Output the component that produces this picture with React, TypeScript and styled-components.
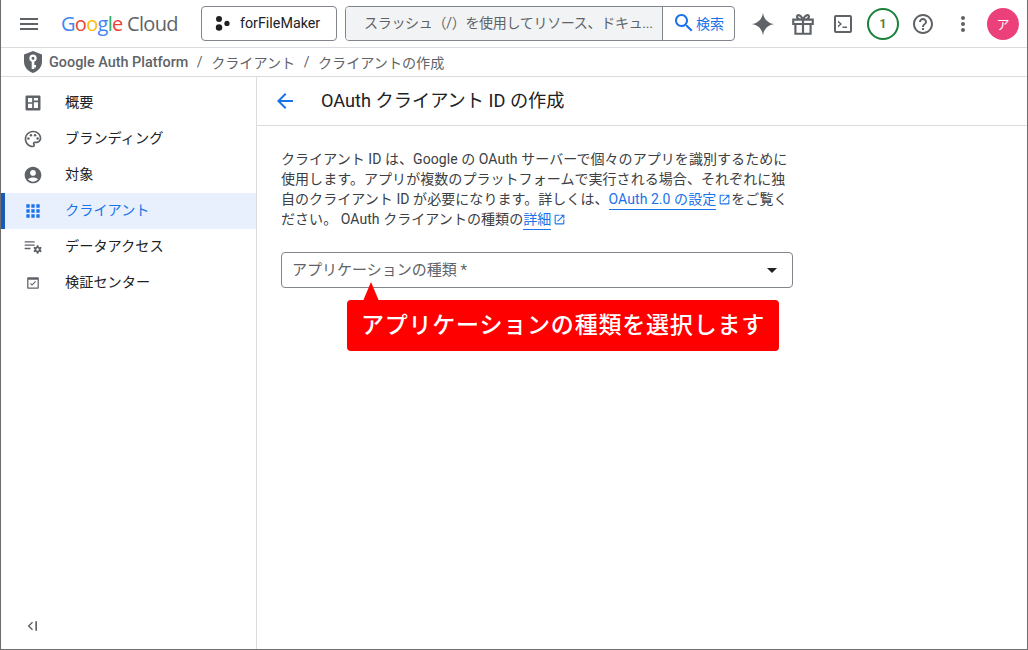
import React from 'react';
import styled, { createGlobalStyle } from 'styled-components';

const FONT = `Roboto, "Noto Sans CJK JP", sans-serif`;

const GlobalStyle = createGlobalStyle`
  html, body {
    margin: 0;
    padding: 0;
    background: #fff;
  }
  body {
    font-family: ${FONT};
    color: #202124;
  }
`;

const Frame = styled.div`
  box-sizing: border-box;
  width: 1028px;
  height: 650px;
  border: 1px solid #6d6d6d;
  border-top: 0;
  display: flex;
  flex-direction: column;
  overflow: hidden;
  background: #fff;
`;

// top bar
const TopBar = styled.header`
  flex: none;
  height: 48px;
  box-sizing: border-box;
  display: flex;
  align-items: center;
  border-bottom: 1px solid #dadce0;
`;

const MenuSlot = styled.span`
  width: 60px;
  padding-left: 16px;
  box-sizing: border-box;
  display: flex;
  flex: none;
  color: #5f6368;
`;

const Logo = styled.div`
  width: 140px;
  flex: none;
  font-family: "Open Sans", sans-serif;
  font-size: 20px;
  letter-spacing: -0.7px;
  white-space: nowrap;
  color: #5f6368;
`;

const Letter = styled.span<{ $c: string }>`
  color: ${p => p.$c};
`;

const ProjectButton = styled.div`
  box-sizing: border-box;
  width: 136px;
  height: 35px;
  flex: none;
  border: 1px solid #80868b;
  border-radius: 4px;
  display: flex;
  align-items: center;
  gap: 8px;
  padding-left: 12px;
  font-size: 14.3px;
  color: #202124;
  margin-top: -1px;
`;

const SearchBox = styled.div`
  box-sizing: border-box;
  width: 390px;
  height: 35px;
  flex: none;
  margin-left: 8px;
  margin-top: -1px;
  border: 1px solid #80868b;
  border-radius: 4px;
  display: flex;
  overflow: hidden;
`;

const SearchField = styled.div`
  width: 317px;
  flex: none;
  box-sizing: border-box;
  padding: 0 0 0 18px;
  background: #f1f3f4;
  border-right: 1px solid #80868b;
  color: #5f6368;
  font-size: 14px;
  letter-spacing: -0.3px;
  line-height: 33px;
  white-space: nowrap;
`;

const SearchAction = styled.div`
  flex: 1;
  display: flex;
  align-items: center;
  padding-left: 9px;
  color: #1a73e8;
  font-size: 14px;
`;

const ActionRow = styled.div`
  display: flex;
  align-items: center;
  margin-left: 8px;
`;

const ActionSlot = styled.span`
  width: 40px;
  height: 40px;
  display: flex;
  align-items: center;
  justify-content: center;
  color: #5f6368;
`;

const Counter = styled.span`
  box-sizing: border-box;
  width: 32px;
  height: 32px;
  border: 2px solid #188038;
  border-radius: 50%;
  display: flex;
  align-items: center;
  justify-content: center;
  font-size: 12px;
  font-weight: 700;
  color: #5f7a3a;
`;

const Avatar = styled.span`
  width: 32px;
  height: 32px;
  border-radius: 50%;
  background: #ec407a;
  color: #fff;
  font-size: 13px;
  display: flex;
  align-items: center;
  justify-content: center;
`;

// breadcrumb
const Crumbs = styled.nav`
  flex: none;
  height: 29px;
  box-sizing: border-box;
  border-bottom: 1px solid #dadce0;
  display: flex;
  align-items: center;
  padding-left: 20px;
  color: #5f6368;
  font-size: 14.1px;
  white-space: nowrap;
`;

const CrumbTitle = styled.span`
  margin-left: 4px;
  font-size: 14.4px;
  font-weight: 500;
`;

const CrumbSep = styled.span`
  margin: 0 8.5px;
`;

// body
const Body = styled.div`
  flex: 1;
  min-height: 0;
  display: flex;
`;

const Side = styled.aside`
  width: 256px;
  flex: none;
  box-sizing: border-box;
  border-right: 1px solid #dadce0;
  padding-top: 8px;
  display: flex;
  flex-direction: column;
`;

const NavItem = styled.div<{ $active?: boolean }>`
  height: 36px;
  flex: none;
  box-sizing: border-box;
  display: flex;
  align-items: center;
  padding-left: 22px;
  gap: 22px;
  font-size: 14.2px;
  color: ${p => (p.$active ? '#1a73e8' : '#202124')};
  background: ${p => (p.$active ? '#e8f0fe' : 'transparent')};
  border-left: 4px solid ${p => (p.$active ? '#185abc' : 'transparent')};
  & > svg {
    color: ${p => (p.$active ? '#1a73e8' : '#5f6368')};
    margin-left: -4px;
  }
`;

const NavLabel = styled.span`
  margin-bottom: 4px;
`;

const Collapse = styled.div`
  margin-top: auto;
  height: 31px;
  padding-left: 23px;
  color: #5f6368;
  display: flex;
  align-items: flex-start;
`;

const Main = styled.main`
  flex: 1;
  min-width: 0;
`;

const TitleRow = styled.div`
  height: 49px;
  box-sizing: border-box;
  border-bottom: 1px solid #dadce0;
  display: flex;
  align-items: center;
  padding-left: 16px;
  color: #1a73e8;
`;

const Title = styled.h1`
  margin: 0 0 5px 24px;
  font-size: 18.2px;
  font-weight: 400;
  color: #202124;
  white-space: nowrap;
`;

const Content = styled.div`
  width: 512px;
  padding: 23px 0 0 24px;
`;

const Intro = styled.p`
  margin: 0;
  font-size: 14px;
  letter-spacing: 0.06px;
  line-height: 20px;
  color: #3c4043;
`;

const DocLink = styled.a`
  color: #1a73e8;
  text-decoration: none;
  border-bottom: 1px solid #1a73e8;
  padding-bottom: 2px;
`;

const LinkIcon = styled.svg`
  width: 13px;
  height: 13px;
  margin-left: 2px;
  vertical-align: -2px;
  color: #1a73e8;
`;

const SelectWrap = styled.div`
  position: relative;
  margin-top: 23px;
`;

const Select = styled.div`
  box-sizing: border-box;
  height: 36px;
  border: 1px solid #80868b;
  border-radius: 4px;
  display: flex;
  align-items: center;
  justify-content: space-between;
  padding: 0 15px 0 10px;
  font-size: 15px;
  color: #5f6368;
`;

const SelectLabel = styled.span`
  margin-bottom: 4px;
`;

const Caret = styled.span`
  width: 0;
  height: 0;
  border-left: 5px solid transparent;
  border-right: 5px solid transparent;
  border-top: 5px solid #202124;
`;

const Callout = styled.div`
  position: absolute;
  left: 66px;
  top: 48px;
  width: 432px;
  height: 51px;
  box-sizing: border-box;
  background: #f00;
  border-radius: 4px;
  color: #fff;
  font-size: 23px;
  font-weight: 500;
  letter-spacing: 0.8px;
  line-height: 52px;
  text-align: center;
  white-space: nowrap;
  &::before {
    content: '';
    position: absolute;
    left: 16px;
    bottom: 100%;
    margin-bottom: -1px;
    border-left: 8px solid transparent;
    border-right: 8px solid transparent;
    border-bottom: 19px solid #f00;
  }
`;

const Icon: React.FC<{ size?: number; d?: string; children?: React.ReactNode }> = ({ size = 24, d, children }) => (
  <svg width={size} height={size} viewBox="0 0 24 24" fill="currentColor" style={{ flex: 'none' }}>
    {d && <path d={d} />}
    {children}
  </svg>
);

const MENU = 'M3 18h18v-2H3v2zm0-5h18v-2H3v2zm0-7v2h18V6H3z';
const BACK = 'M20 11H7.83l5.59-5.59L12 4l-8 8 8 8 1.41-1.41L7.83 13H20v-2z';
const SEARCH =
  'M15.5 14h-.79l-.28-.27C15.41 12.59 16 11.11 16 9.5 16 5.91 13.09 3 9.5 3S3 5.91 3 9.5 5.91 16 9.5 16c1.61 0 3.09-.59 4.23-1.57l.27.28v.79l5 4.99L20.49 19l-4.99-5zm-6 0C7.01 14 5 11.99 5 9.5S7.01 5 9.5 5 14 7.01 14 9.5 11.99 14 9.5 14z';
const HELP =
  'M11 18h2v-2h-2v2zm1-16C6.48 2 2 6.48 2 12s4.48 10 10 10 10-4.48 10-10S17.52 2 12 2zm0 18c-4.41 0-8-3.59-8-8s3.59-8 8-8 8 3.59 8 8-3.59 8-8 8zm0-14c-2.21 0-4 1.79-4 4h2c0-1.1.9-2 2-2s2 .9 2 2c0 2-3 1.75-3 5h2c0-2.25 3-2.5 3-5 0-2.21-1.79-4-4-4z';
const MORE =
  'M12 8c1.1 0 2-.9 2-2s-.9-2-2-2-2 .9-2 2 .9 2 2 2zm0 2c-1.1 0-2 .9-2 2s.9 2 2 2 2-.9 2-2-.9-2-2-2zm0 6c-1.1 0-2 .9-2 2s.9 2 2 2 2-.9 2-2-.9-2-2-2z';
const ACCOUNT =
  'M12 2C6.48 2 2 6.48 2 12s4.48 10 10 10 10-4.48 10-10S17.52 2 12 2zm0 4c1.93 0 3.5 1.57 3.5 3.5S13.93 13 12 13s-3.5-1.57-3.5-3.5S10.07 6 12 6zm0 14c-2.03 0-4.43-.82-6.14-2.88C7.55 15.8 9.68 15 12 15s4.45.8 6.14 2.12C16.43 19.18 14.03 20 12 20z';
const APPS =
  'M4 8h4V4H4v4zm6 12h4v-4h-4v4zm-6 0h4v-4H4v4zm0-6h4v-4H4v4zm6 0h4v-4h-4v4zm6-10v4h4V4h-4zm-6 4h4V4h-4v4zm6 6h4v-4h-4v4zm0 6h4v-4h-4v4z';
const OPEN =
  'M19 19H5V5h7V3H5c-1.11 0-2 .9-2 2v14c0 1.1.89 2 2 2h14c1.1 0 2-.9 2-2v-7h-2v7zM14 3v2h3.59l-9.83 9.83 1.41 1.41L19 6.41V10h2V3h-7z';
const PALETTE =
  'M12 22C6.49 22 2 17.51 2 12S6.49 2 12 2s10 4.04 10 9c0 3.31-2.69 6-6 6h-1.77c-.28 0-.5.22-.5.5 0 .12.05.23.13.33.41.47.64 1.06.64 1.67A2.5 2.5 0 0 1 12 22zm0-18c-4.41 0-8 3.59-8 8s3.59 8 8 8c.28 0 .5-.22.5-.5a.54.54 0 0 0-.14-.35c-.41-.46-.63-1.05-.63-1.65a2.5 2.5 0 0 1 2.5-2.5H16c2.21 0 4-1.79 4-4 0-3.86-3.59-7-8-7z';

const GoogleMark = () => (
  <>
    <Letter $c="#4285f4">G</Letter>
    <Letter $c="#ea4335">o</Letter>
    <Letter $c="#fbbc04">o</Letter>
    <Letter $c="#4285f4">g</Letter>
    <Letter $c="#34a853">l</Letter>
    <Letter $c="#ea4335">e</Letter>
  </>
);

const ExternalIcon = () => (
  <LinkIcon viewBox="0 0 24 24" fill="currentColor">
    <path d={OPEN} />
  </LinkIcon>
);

const App: React.FC = () => (
  <Frame>
    <GlobalStyle />
    <TopBar>
      <MenuSlot>
        <Icon d={MENU} />
      </MenuSlot>
      <Logo>
        <GoogleMark /> Cloud
      </Logo>
      <ProjectButton>
        <Icon size={18}>
          <circle cx="6.700" cy="6.700" r="4" />
          <circle cx="6.700" cy="18" r="4.300" />
          <circle cx="17.300" cy="12.500" r="3.500" />
        </Icon>
        forFileMaker
      </ProjectButton>
      <SearchBox>
        <SearchField>スラッシュ（/）を使用してリソース、ドキュ...</SearchField>
        <SearchAction>
          <Icon d={SEARCH} />
          検索
        </SearchAction>
      </SearchBox>
      <ActionRow>
        <ActionSlot>
          <Icon size={26} d="M12 1.5c.7 5.8 4.7 9.8 10.5 10.5-5.8.7-9.8 4.7-10.5 10.5C11.3 16.7 7.3 12.7 1.5 12 7.3 11.3 11.3 7.3 12 1.5z" />
        </ActionSlot>
        <ActionSlot>
          <Icon size={26}>
            <path
              fill="none"
              stroke="currentColor"
              strokeWidth="2"
              d="M3 8h18v4H3zM5 12v9h14v-9M12 8v13M12 8C10 3 6 3 6.5 5.5 7 8 12 8 12 8zm0 0c2-5 6-5 5.5-2.5C17 8 12 8 12 8z"
            />
          </Icon>
        </ActionSlot>
        <ActionSlot>
          <Icon size={24}>
            <path
              fillRule="evenodd"
              d="M5 3h14a2 2 0 0 1 2 2v14a2 2 0 0 1-2 2H5a2 2 0 0 1-2-2V5a2 2 0 0 1 2-2zm0 2v14h14V5H5z"
            />
            <path d="M7 8.5l4 3.5-4 3.500v-2l2-1.500-2-1.500zM11.500 14.500H16V16h-4.500z" />
          </Icon>
        </ActionSlot>
        <ActionSlot>
          <Counter>1</Counter>
        </ActionSlot>
        <ActionSlot>
          <Icon d={HELP} />
        </ActionSlot>
        <ActionSlot>
          <Icon d={MORE} />
        </ActionSlot>
        <ActionSlot>
          <Avatar>ア</Avatar>
        </ActionSlot>
      </ActionRow>
    </TopBar>

    <Crumbs>
      <Icon size={24}>
        <path
          fillRule="evenodd"
          fill="#5f6368"
          d="M12 1l9 3.500v7c0 5.500-3.800 9.800-9 11.500-5.200-1.700-9-6-9-11.500v-7zm0 3.500a3.700 3.700 0 0 0-1.300 7.150V19h2.600v-1.500H15V15h-1.700v-3.350A3.700 3.700 0 0 0 12 4.500zm0 2.200a1.500 1.500 0 1 1 0 3 1.500 1.500 0 0 1 0-3z"
        />
      </Icon>
      <CrumbTitle>Google Auth Platform</CrumbTitle>
      <CrumbSep>/</CrumbSep>
      クライアント
      <CrumbSep>/</CrumbSep>
      クライアントの作成
    </Crumbs>

    <Body>
      <Side>
        <NavItem>
          <Icon size={20}>
            <path
              fillRule="evenodd"
              d="M4.500 3h15A1.500 1.500 0 0 1 21 4.500v15a1.500 1.500 0 0 1-1.500 1.500h-15A1.500 1.500 0 0 1 3 19.500v-15A1.500 1.500 0 0 1 4.500 3zM6 6v5h5V6H6zm7 0v3h5V6h-5zm0 5v7h5v-7h-5zm-7 2v5h5v-5H6z"
            />
          </Icon>
          <NavLabel>概要</NavLabel>
        </NavItem>
        <NavItem>
          <Icon size={20}>
            <path d={PALETTE} />
            <circle cx="6.500" cy="11.500" r="1.500" />
            <circle cx="9.500" cy="7.500" r="1.500" />
            <circle cx="14.500" cy="7.500" r="1.500" />
            <circle cx="17.500" cy="11.500" r="1.500" />
          </Icon>
          <NavLabel>ブランディング</NavLabel>
        </NavItem>
        <NavItem>
          <Icon size={20} d={ACCOUNT} />
          <NavLabel>対象</NavLabel>
        </NavItem>
        <NavItem $active>
          <Icon size={20} d={APPS} />
          <NavLabel>クライアント</NavLabel>
        </NavItem>
        <NavItem>
          <Icon size={20}>
            <path d="M2 5h12v1.600H2zM2 9h12v1.600H2zM2 13h7v1.600H2z" />
            <path
              fillRule="evenodd"
              d="M16.500 10h2l.3 1.600 1.200.6 1.500-.6 1 1.700-1.200 1v1.400l1.200 1-1 1.700-1.500-.6-1.200.6-.3 1.600h-2l-.3-1.600-1.200-.6-1.500.6-1-1.700 1.200-1v-1.400l-1.200-1 1-1.700 1.500.6 1.200-.6zm1 3.500a1.500 1.500 0 1 0 0 3 1.500 1.500 0 0 0 0-3z"
            />
          </Icon>
          <NavLabel>データアクセス</NavLabel>
        </NavItem>
        <NavItem>
          <Icon size={20}>
            <path
              fillRule="evenodd"
              d="M6 5h12a1 1 0 0 1 1 1v12a1 1 0 0 1-1 1H6a1 1 0 0 1-1-1V6a1 1 0 0 1 1-1zm.500 3v9.500h11V8h-11z"
            />
            <path d="M10.800 15.400L8.400 13l1-1 1.400 1.400 3.800-3.800 1 1z" />
          </Icon>
          <NavLabel>検証センター</NavLabel>
        </NavItem>
        <Collapse>
          <Icon size={16}>
            <path d="M12 5.500l1.500 1.500-5 5 5 5-1.500 1.500L5.500 12z" />
            <path d="M17 5h2.500v14H17z" />
          </Icon>
        </Collapse>
      </Side>

      <Main>
        <TitleRow>
          <Icon d={BACK} />
          <Title>OAuth クライアント ID の作成</Title>
        </TitleRow>
        <Content>
          <Intro>
            クライアント ID は、Google の OAuth サーバーで個々のアプリを識別するために使用します。アプリが複数のプラットフォームで実行される場合、それぞれに独自のクライアント ID が必要になります。詳しくは、
            <DocLink>OAuth 2.0 の設定</DocLink>
            <ExternalIcon />
            をご覧ください。 OAuth クライアントの種類の<DocLink>詳細</DocLink>
            <ExternalIcon />
          </Intro>
          <SelectWrap>
            <Select>
              <SelectLabel>アプリケーションの種類 *</SelectLabel>
              <Caret />
            </Select>
            <Callout>アプリケーションの種類を選択します</Callout>
          </SelectWrap>
        </Content>
      </Main>
    </Body>
  </Frame>
);

export default App;
